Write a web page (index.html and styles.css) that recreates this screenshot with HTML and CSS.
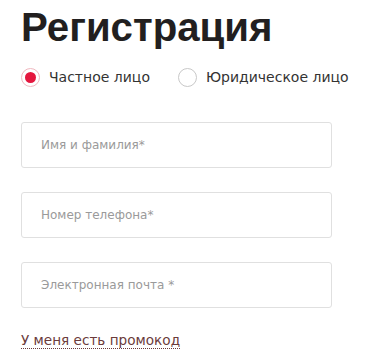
FILE: index.html
```html
<!DOCTYPE html>
<html lang="ru">
<head>
<meta charset="utf-8">
<link rel="stylesheet" href="styles.css">
</head>
<body>
<div class="page">
  <h1 class="title">Регистрация</h1>
  <div class="radios">
    <label class="radio"><span class="dot checked"></span><span>Частное лицо</span></label>
    <label class="radio"><span class="dot"></span><span>Юридическое лицо</span></label>
  </div>
  <div class="fields">
    <div class="field">Имя и фамилия*</div>
    <div class="field">Номер телефона*</div>
    <div class="field">Электронная почта *</div>
  </div>
  <a class="promo">У меня есть промокод</a>
</div>
</body>
</html>
```
FILE: styles.css
```css
html, body { margin: 0; padding: 0; background: #fff; }
.page { padding: 0 0 0 21px; font-family: "DejaVu Sans", Verdana, sans-serif; }
.title {
  margin: 0;
  padding-top: 2px;
  font-family: "Liberation Sans", Arial, sans-serif;
  font-weight: 700;
  font-size: 40.2px;
  line-height: 52px;
  color: #221f1f;
}
.radios { display: flex; gap: 28px; margin-top: 12px; height: 22px; align-items: center; }
.radio { display: flex; align-items: center; gap: 9px; font-size: 14px; color: #333; }
.dot {
  width: 19px; height: 19px; box-sizing: border-box;
  border: 1px solid #c8c8c8; border-radius: 50%; background: #fff;
  display: flex; align-items: center; justify-content: center;
}
.dot.checked { border-color: #f0b8c0; }
.dot.checked::after { content: ""; width: 11px; height: 11px; border-radius: 50%; background: #e4173e; }
.fields { display: flex; flex-direction: column; gap: 24px; margin-top: 34px; width: 311px; }
.field {
  height: 46px; box-sizing: border-box;
  border: 1px solid #e0e0e0; border-radius: 3px;
  padding-left: 19px; display: flex; align-items: center;
  font-size: 12px; color: #9a9a9a;
}
.promo {
  display: inline-block; margin-top: 24px;
  font-size: 13.6px; color: #6b3b3b; text-decoration: none;
  border-bottom: 1px dotted #6b3b3b; line-height: 16px;
}
```
